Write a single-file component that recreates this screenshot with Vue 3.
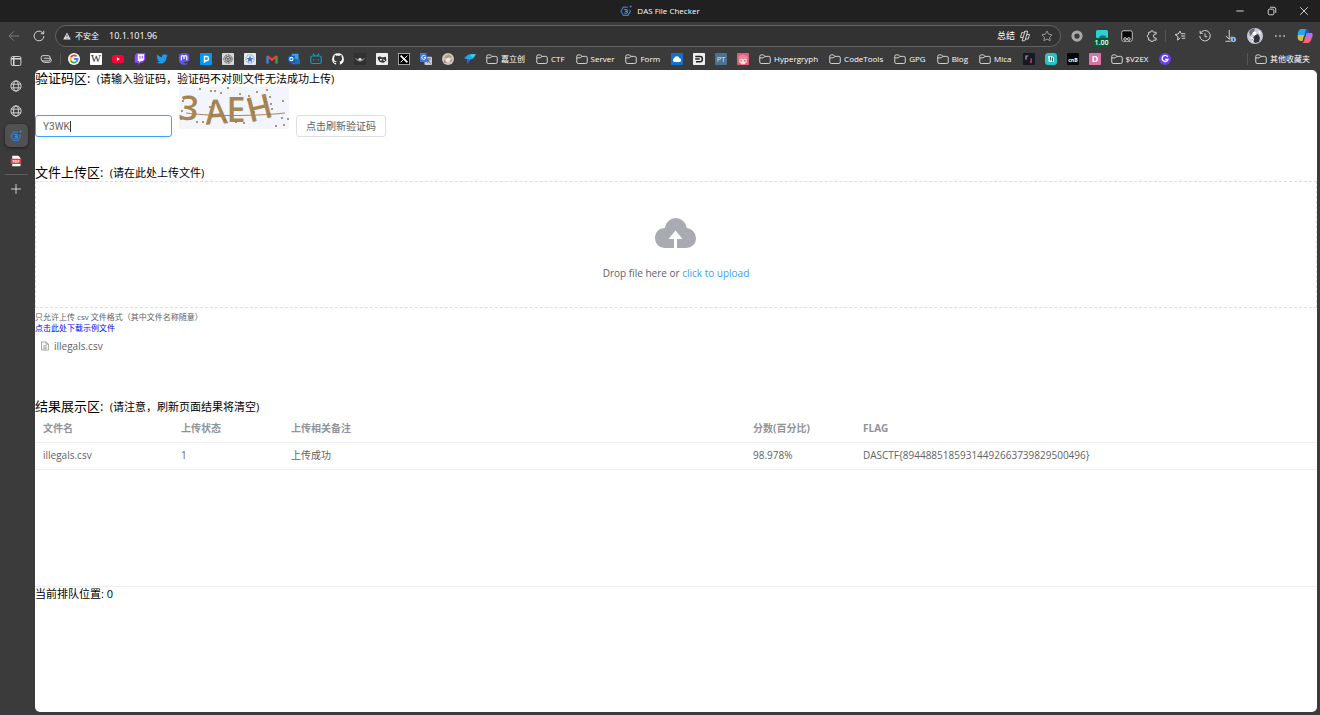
<template>
  <div class="window">
    <header class="title-bar">
      <div class="title">
        <svg class="title-icon" viewBox="0 0 16 16" v-html="icons.das"></svg>
        <span>DAS File Checker</span>
      </div>
      <div class="window-buttons">
        <button v-for="b in windowButtons" :key="b.label" :aria-label="b.label">
          <svg class="icon" viewBox="0 0 16 16" v-html="b.icon"></svg>
        </button>
      </div>
    </header>

    <div class="toolbar">
      <button class="nav-button dim" aria-label="Back">
        <svg class="icon" viewBox="0 0 16 16"><path d="M15 8H1.5M7.5 2 1.5 8l6 6" /></svg>
      </button>
      <button class="nav-button" aria-label="Reload">
        <svg class="icon" viewBox="0 0 16 16"><path d="M14.5 8A6.5 6.5 0 1 1 12.4 3.2L14 4.8M14.3 1v4h-4" /></svg>
      </button>
      <div class="address-bar">
        <svg class="warn-icon" viewBox="0 0 16 16">
          <path d="M8 1 15.5 15H.5Z" fill="#e0e0e0" />
          <path d="M8 5.5v5M8 12v1.6" stroke="#333" stroke-width="1.6" />
        </svg>
        <span class="insecure">不安全</span>
        <input class="url" v-model="url" aria-label="Address" />
        <button class="summary">总结</button>
        <svg class="icon" viewBox="0 0 16 16">
          <path d="M6 3.5 8 1.6h3.500L10.300 6H14l-1.700 6H9L7.500 14.400H4.200L5.500 10H2L3.700 3.500ZM8 1.600 5.500 10M10.300 6 8.500 12.500" />
        </svg>
        <svg class="icon star" viewBox="0 0 16 16">
          <path d="m8 1.3 2.1 4.3 4.7.7-3.4 3.3.8 4.7L8 12.1l-4.2 2.2.8-4.7L1.2 6.3l4.7-.7Z" />
        </svg>
      </div>
      <div class="extensions">
        <button v-for="e in extensions" :key="e.label" :aria-label="e.label" :class="{ divided: e.divided }">
          <svg class="icon" :class="{ large: e.large }" viewBox="0 0 16 16" v-html="e.icon"></svg>
          <span v-if="e.badge" class="badge">{{ e.badge }}</span>
        </button>
      </div>
    </div>

    <div class="body">
      <aside class="sidebar">
        <button v-for="(t, i) in tabs" :key="i" class="tab" :class="{ active: t.active }" :aria-label="t.label">
          <svg class="icon" viewBox="0 0 16 16" v-html="t.icon"></svg>
        </button>
        <hr />
        <button class="tab" aria-label="New tab">
          <svg class="icon" viewBox="0 0 16 16"><path d="M8 1.5v13M1.5 8h13" /></svg>
        </button>
      </aside>

      <div class="content">
        <nav class="bookmarks">
          <svg class="icon" viewBox="0 0 16 16">
            <rect x="1.5" y="3.5" width="12" height="7" rx="2.5" />
            <path d="M5 7h8a2.500 2.500 0 0 1 2 2.500 3 3 0 0 1-3 3H6a3 3 0 0 1-3-2" />
          </svg>
          <span class="divider"></span>
          <a v-for="(b, i) in bookmarks" :key="i" href="#" class="bookmark" :aria-label="b.name">
            <svg class="icon" viewBox="0 0 16 16" v-html="b.icon || icons.folder"></svg>
            <span v-if="!b.icon">{{ b.name }}</span>
          </a>
          <span class="divider last"></span>
          <a href="#" class="bookmark">
            <svg class="icon" viewBox="0 0 16 16" v-html="icons.folder"></svg>
            <span>其他收藏夹</span>
          </a>
        </nav>

        <main class="page">
          <section class="captcha-section">
            <h2>验证码区: <small>(请输入验证码，验证码不对则文件无法成功上传)</small></h2>
            <div class="captcha-row">
              <div class="captcha-input">
                <input v-model="captcha" aria-label="验证码" />
                <span class="caret"></span>
              </div>
              <svg class="captcha-image" viewBox="0 0 110 42">
                <rect width="110" height="42" fill="#f3f5fe" />
                <g class="captcha-letters">
                  <text x="10" y="33" transform="rotate(6 10 20)">3</text>
                  <text x="37" y="37" transform="rotate(-4 37 22)">A</text>
                  <text x="57" y="35">E</text>
                  <text x="80" y="33" transform="rotate(-14 80 20)">H</text>
                </g>
                <path d="M7 26Q30 29 60 28.500T106 26" fill="none" stroke="#a68554" />
                <circle v-for="(d, i) in dots" :key="i" :cx="d[0]" :cy="d[1]" r="1" fill="#9b7437" />
              </svg>
              <button class="refresh" @click="captcha = ''">点击刷新验证码</button>
            </div>
          </section>

          <section class="upload-section">
            <h2>文件上传区: <small>(请在此处上传文件)</small></h2>
            <button class="dragger">
              <svg class="cloud" viewBox="0 0 42 32">
                <path d="M9.500 31A9.500 9.500 0 0 1 0 21.500 9.500 9.500 0 0 1 9.800 11 11 11 0 0 1 31.700 11 10 10 0 0 1 41 21 9.500 9.500 0 0 1 31.500 31H22V22h5.500l-7-8.500-7 8.500H19v9Z" fill="#a8abb2" />
              </svg>
              <span>Drop file here or <em>click to upload</em></span>
            </button>
            <div class="tip">
              <div>只允许上传 csv 文件格式（其中文件名称随意）</div>
              <a href="#">点击此处下载示例文件</a>
            </div>
            <div class="file">
              <svg viewBox="0 0 16 16"><path d="M2.500 1.500h7L13.500 5v9.500h-11ZM9.500 1.500V5h4M5 7.500h6M5 10h6M5 12.300h6" /></svg>
              <span>illegals.csv</span>
            </div>
          </section>

          <section class="result-section">
            <h2>结果展示区: <small>(请注意，刷新页面结果将清空)</small></h2>
            <div class="table-box">
              <table>
                <colgroup>
                  <col class="col-name" />
                  <col class="col-short" />
                  <col />
                  <col class="col-short" />
                  <col />
                </colgroup>
                <thead>
                  <tr>
                    <th v-for="c in columns" :key="c">{{ c }}</th>
                  </tr>
                </thead>
                <tbody>
                  <tr v-for="r in results" :key="r.name">
                    <td>{{ r.name }}</td>
                    <td>{{ r.status }}</td>
                    <td>{{ r.remark }}</td>
                    <td>{{ r.score }}</td>
                    <td>{{ r.flag }}</td>
                  </tr>
                </tbody>
              </table>
            </div>
            <p class="queue">当前排队位置: {{ queue }}</p>
          </section>
        </main>
      </div>
    </div>
  </div>
</template>

<script setup>
import { ref } from 'vue';

const url = ref('10.1.101.96');
const captcha = ref('Y3WK');
const queue = ref(0);

const columns = ['文件名', '上传状态', '上传相关备注', '分数(百分比)', 'FLAG'];
const results = ref([
  {
    name: 'illegals.csv',
    status: 1,
    remark: '上传成功',
    score: '98.978%',
    flag: 'DASCTF{89448851859314492663739829500496}'
  }
]);

// Noise dots of the captcha
const dots = [
  [21, 2], [32, 4], [36, 4], [49, 1], [42, 6], [4, 14], [9, 10], [3, 24], [2, 32],
  [18, 35], [24, 35], [31, 20], [34, 16], [33, 28], [46, 33], [61, 7], [70, 9],
  [69, 13], [78, 5], [88, 3], [91, 10], [86, 15], [92, 17], [93, 22], [90, 27],
  [104, 14], [103, 31], [109, 32], [97, 39], [105, 38], [57, 35], [65, 36], [75, 25]
];

const globe = '<circle cx="8" cy="8" r="6.800"/><ellipse cx="8" cy="8" rx="3.200" ry="6.800"/><path d="M1.500 5.500h13M1.500 10.500h13"/>';
const tile = (bg, inner) => `<rect width="16" height="16" rx="1" fill="${bg}" stroke="none"/>${inner}`;
const letter = (ch, color, size = 13, weight = 700) =>
  `<text x="8" y="12" text-anchor="middle" font-size="${size}" font-weight="${weight}" fill="${color}" stroke="none">${ch}</text>`;

const icons = {
  das: '<path d="M10.500 2.800H4.500L1.300 8.300l3.200 5.500h6.300l3-5.500-1-2" fill="none" stroke="#2f7fd6" stroke-width="1.500"/><path d="M5.500 6h3.300a1.300 1.300 0 0 1 0 2.500H6.500M8.800 8.500a1.300 1.300 0 0 1 0 2.600H5.500" fill="none" stroke="#3b8ee5" stroke-width="1.400"/><circle cx="14.200" cy="2" r="1.300" fill="#3b8ee5" stroke="none"/>',
  folder: '<path d="M1 4.500a2 2 0 0 1 2-2h3L8 4.500h5a2 2 0 0 1 2 2V12a2 2 0 0 1-2 2H3a2 2 0 0 1-2-2ZM1 6.500h4.500l2.500-2"/>'
};

const windowButtons = [
  { label: 'Minimize', icon: '<path d="M3 8h10"/>' },
  { label: 'Restore', icon: '<rect x="3" y="5.500" width="7.500" height="7.500" rx="1.500"/><path d="M5.500 3h5A2.500 2.500 0 0 1 13 5.500v5"/>' },
  { label: 'Close', icon: '<path d="m3 3 10 10M13 3 3 13"/>' }
];

const extensions = [
  { label: 'Record', icon: '<circle cx="8" cy="8" r="5.500" stroke="#a8a8a8" stroke-width="4"/>' },
  {
    label: 'Speed',
    badge: '1.00',
    icon: '<rect y="0" width="16" height="11" rx="2" fill="#2fd0d0" stroke="none"/><path d="M4 11a5 4 0 0 1 10 0Z" fill="#176a9c" stroke="none"/>'
  },
  {
    label: 'Scripts',
    icon: '<rect x="1" y="1" width="14" height="14" rx="2.500" fill="#080808" stroke="#c8c8c8"/><circle cx="5.500" cy="12" r="1.800" fill="#222"/><circle cx="10.500" cy="12" r="1.800" fill="#222"/>'
  },
  {
    label: 'Extensions',
    icon: '<path d="M13.500 5.500V3H10a2 2 0 0 0-4 0H3.500v3a2.200 2.200 0 0 0 0 4.300v3.200H6a2 2 0 0 0 4 0h3.500v-2.800h-1a2.200 2.200 0 0 1 0-5.200Z"/>'
  },
  {
    label: 'Favorites',
    divided: true,
    icon: '<path d="m8.500 10.500-3.800 3 .7-4.500-4-3L5.700 5.300 8 1.500l1.700 3.500H15M9.500 8H15M10.500 11H15"/>'
  },
  { label: 'History', icon: '<path d="M2 4a7 7 0 1 1-1 4M1.500 1v3.500H5M8 4.500V9h3"/>' },
  {
    label: 'Downloads',
    icon: '<path d="M7 0v12M2.500 8 7 12.300 11 8.500M2 15h7"/><circle cx="12.500" cy="12.500" r="3.500" fill="#91bdf7" stroke="none"/><path d="M12.500 11v3.500" stroke="#234"/>'
  },
  {
    label: 'Profile',
    large: true,
    icon: '<circle cx="8" cy="8" r="8" fill="#c9cbd4" stroke="none"/><path d="M2 4Q4 0 8 .500L7 4 3 8Z" fill="#6c6b78" stroke="none"/><path d="m8 7 3-1 2 4-1 4-4 1-3-3Z" fill="#30303c" stroke="none"/><circle cx="7.500" cy="5.500" r="2" fill="#fff" stroke="none"/><path d="m3.500 9.500 3 1.500-1 3M12 3l1 3" stroke="#fff" stroke-width="1.200"/>'
  },
  { label: 'More', icon: '<path d="M1.500 8h2M7 8h2M12.500 8h2" stroke-width="2"/>' },
  {
    label: 'Copilot',
    large: true,
    icon: '<g stroke="none"><path d="M4 1h5.500L7 9H1C0 5 2 1 4 1Z" fill="#25a9ed"/><path d="M1 7h6l-1.500 6H4C1 13 0 10 1 7Z" fill="#d2bd3f"/><path d="M9 1c3 0 2.500 3 4 4H8Z" fill="#244fc3"/><path d="M9.500 5H14c2 0 2 2 1 5h-7Z" fill="#b96cf1"/><path d="M8 9h7c-1 4-2 6-5 6H5c2 0 2.500-4 3-6Z" fill="#f3667c"/></g>'
  }
];

const tabs = [
  { label: 'Tab actions', icon: '<rect x="1.500" y="2" width="13" height="12" rx="2"/><path d="M1.500 5h13M5 2v12" stroke-width="2"/>' },
  { label: 'Web page', icon: globe },
  { label: 'Web page', icon: globe },
  { label: 'DAS File Checker', icon: icons.das, active: true },
  {
    label: 'PDF',
    icon: '<g stroke="none"><path d="M3 1h8l3 3v11H3Z" fill="#fff"/><rect x="1" y="5" width="14" height="7" fill="#e5373c"/><text x="8" y="10.500" text-anchor="middle" font-size="5" font-weight="700" fill="#fff">PDF</text></g>'
  }
];

const bookmarks = [
  {
    name: 'Google',
    icon: '<circle cx="8" cy="8" r="8" fill="#fff" stroke="none"/><g stroke-width="2.400"><path d="M11.500 4.600A4.800 4.800 0 0 0 3.800 5.700" stroke="#ea4335"/><path d="M3.800 5.700a4.800 4.800 0 0 0 0 4.600" stroke="#fbbc05"/><path d="M3.800 10.300a4.800 4.800 0 0 0 7.400 1.300" stroke="#34a853"/><path d="M11.200 11.600A4.800 4.800 0 0 0 12.800 8H8" stroke="#4285f4"/></g>'
  },
  { name: 'Wikipedia', icon: tile('#fff', '<text x="8" y="12.500" text-anchor="middle" font-family="Liberation Serif, serif" font-size="14" fill="#222" stroke="none">W</text>') },
  { name: 'YouTube', icon: '<rect y="2.500" width="16" height="11" rx="3" fill="#f03" stroke="none"/><path d="m6.500 5.500 4 2.500-4 2.500Z" fill="#fff" stroke="none"/>' },
  { name: 'Twitch', icon: '<path d="M3.500 0H15v9l-4 4H8.500l-3 3v-3H1V3Z" fill="#9146ff" stroke="none"/><path d="M5 1.500h8.500v7l-2 2H9l-2 2v-2H5Z" fill="#fff" stroke="none"/><path d="M8 4v3.500M11 4v3.500" stroke="#9146ff"/>' },
  { name: 'Twitter', icon: '<path d="M15.500 3.500 14 5.500C14 11 10 14 5.500 14 3.500 14 2 13.500.5 12.500c2 0 3.300-.5 4.500-1.300-1.500 0-2.500-1-3-2.200h1.300C1.500 8.500 1 7.200 1 5.800l1.300.4C1 5 .8 3.300 1.500 2c2 2.200 4 3.300 6.500 3.500C7.600 3 9.300 1.500 11.200 1.500c1 0 1.700.4 2.300 1L15.500 2l-1 1.600Z" fill="#1d9bf0" stroke="none"/>' },
  { name: 'Mastodon', icon: '<path d="M4 .8C7 0 10 0 12.500.8 15.500 2 15 6 15 8c0 3-2 4-7.500 4 0 1.500 2 2 4.500 1.500v1.700C7 16.500 3 15.500 2 12 1 9 1 6 1 4.500 1 2.300 2.500 1.200 4 .8Z" fill="#6059df" stroke="none"/><path d="M4.500 9.500V5.300C4.500 3 8 3 8 5.500V8M8 5.500C8 3 11.700 3 11.700 5.300v4.200" stroke="#fff" stroke-width="1.600"/>' },
  { name: 'Pixiv', icon: tile('#0096fa', '<path d="M6 13V4.500h2.500a2.800 2.800 0 0 1 0 5.800H6" stroke="#fff" stroke-width="2"/>') },
  { name: 'OpenAI', icon: tile('#d7d7d7', '<circle cx="8" cy="8" r="5.500" stroke="#555" stroke-dasharray="4 1"/><path d="M8 4.500 11 6v4l-3 1.500L5 10V6ZM5 6l3 2 3-2M8 8v3.500" stroke="#555"/>') },
  { name: 'Badge', icon: tile('#e3e9f2', '<circle cx="8" cy="8" r="5.500" stroke="#7796c5" stroke-dasharray="2 1"/><path d="m8 3.500 1.300 3 3.200.3-2.400 2.100.7 3.200L8 10.500l-2.800 1.600.7-3.200-2.400-2.100 3.200-.3Z" fill="#4872b3" stroke="none"/>') },
  { name: 'Gmail', icon: '<g stroke-width="3"><path d="M2 14V4" stroke="#4285f4"/><path d="M14 14V4" stroke="#34a853"/><path d="m2 4 6 5 6-5" stroke="#ea4335"/></g>' },
  { name: 'Outlook', icon: '<path d="M5 1h9v9H5Z" fill="#35a7e8" stroke="none"/><path d="M4 8h12v7H4Z" fill="#1b6fc0" stroke="none"/><rect y="3.500" width="9" height="9" rx="1" fill="#0f5ca8" stroke="none"/><circle cx="4.500" cy="8" r="2.200" stroke="#fff" stroke-width="1.400"/>' },
  { name: 'Bilibili', icon: '<g stroke="#0e9bc5" stroke-width="1.600"><rect x="1" y="4" width="14" height="10" rx="2.500"/><path d="m4 1 2.500 3M12 1 9.500 4M5 8v2M11 8v2"/></g>' },
  { name: 'GitHub', icon: '<path d="M8 .5a7.700 7.700 0 0 0-2.500 15v-2.200C3 13.800 2.500 12 2 11.500c1.500-.3 1.500 1.500 3.600.8l.6-1.100C3.500 10.800 2.700 9.500 2.700 7.500c0-1 .3-1.800.8-2.400-.2-.8-.1-1.600.2-2.300 1 0 1.700.5 2.500 1a8 8 0 0 1 3.800 0c.8-.5 1.500-1 2.500-1 .3.700.4 1.500.2 2.300.5.600.8 1.400.8 2.400 0 2-1 3.300-3.500 3.700.4.400.5 1 .5 1.800v2.500A7.700 7.700 0 0 0 8 .5Z" fill="#fff" stroke="none"/>' },
  { name: 'Wings', icon: tile('#303030', '<path d="M1 6.500 5 8l3-2 3 2 4-1.500-3 3.500-4 1.500L4 10Z" fill="#888" stroke="none"/><circle cx="8" cy="8.500" r="1.500" fill="#eee" stroke="none"/>') },
  { name: 'Mascot', icon: tile('#eee', '<path d="M2 6q3-3 6 0l5-1 1 5-4 3-5-1-2-3Z" fill="#333" stroke="none"/><circle cx="6.500" cy="9" r="1.300" fill="#fff" stroke="none"/><path d="m9 9 3 1M3 12l3 2" stroke="#fff"/>') },
  { name: 'X', icon: tile('#000', '<rect x=".500" y=".500" width="15" height="15" stroke="#bbb"/><path d="m3.500 3.500 9 9" stroke="#fff" stroke-width="2.400"/><path d="m12.500 3.500-9 9" stroke="#fff"/>') },
  { name: 'Translate', icon: '<g stroke="none"><rect x="6" y="5" width="10" height="11" rx="1" fill="#c6cad4"/><path d="M0 1a1 1 0 0 1 1-1h7l4 12H1a1 1 0 0 1-1-1Z" fill="#3f76df"/></g><path d="M7 4.200A2.600 2.600 0 1 0 7.600 6H5.200" stroke="#fff"/><path d="M9.500 8h5M12 7v1c0 2-1 4-2 5M11 10l3 4" stroke="#65779a"/>' },
  { name: 'Avatar', icon: '<g stroke="none"><circle cx="8" cy="8" r="8" fill="#d0c4bd"/><path d="M4 4l5-2 4 3-3 2-5 1Z" fill="#9ba86d"/><path d="m6 7 4-1 1 4-3 2-3-2Z" fill="#f6eae6"/><path d="M3 9l3 4H3ZM11 10l3-2-2 4Z" fill="#aa6b67"/></g>' },
  { name: 'Bird', icon: '<path d="M0 7 6 2l10-.5L13 7 8 9l-3 5-1-6Z" fill="#20a7e8" stroke="none"/><path d="M8 2l8-.5L11 6Z" fill="#39dbe4" stroke="none"/><path d="m8 9-3 5-1-6Z" fill="#3158db" stroke="none"/>' },
  { name: '嘉立创' },
  { name: 'CTF' },
  { name: 'Server' },
  { name: 'Form' },
  { name: 'Cloud', icon: tile('#1472cc', '<path d="M4 12a3 3 0 0 1 0-5 4 4 0 0 1 7.500 0A2.700 2.700 0 0 1 12 12Z" fill="#fff" stroke="none"/>') },
  { name: 'D mark', icon: tile('#eee', '<path d="M3 4.500h6.500a3 3.500 0 0 1 0 7H4M3 8h6" stroke="#222" stroke-width="2"/>') },
  { name: 'PT', icon: tile('#4c7193', letter('PT', '#dce5ec', 10, 400)) },
  { name: 'Anime', icon: tile('#dc5f79', '<path d="M3 7h10v5l-3 3H6l-3-3Z" fill="#ffe1d5" stroke="none"/><path d="M2 9V4l6-2 6 2v5l-3-2-2 2-2-2-3 2Z" fill="#ef8298" stroke="none"/><path d="M5.500 9.500v2M10.500 9.500v2" stroke="#913047"/>') },
  { name: 'Hypergryph' },
  { name: 'CodeTools' },
  { name: 'GPG' },
  { name: 'Blog' },
  { name: 'Mica' },
  { name: 'Quote', icon: tile('#181824', '<path d="M4 9V4h3" stroke="#aaa" stroke-width="1.500"/><path d="M11 7v5H9" stroke="#e5224f" stroke-width="2"/>') },
  { name: 'Teal', icon: '<rect width="16" height="16" rx="4" fill="#20c6c6" stroke="none"/><path d="M4 4h5l3 2v6H5Z" fill="#e8ffff" stroke="none"/><path d="M7.500 5v5M10 6v5" stroke="#24545b"/>' },
  { name: 'CnB', icon: tile('#080808', letter('cnB', '#fff', 7)) },
  { name: 'D', icon: tile('#dd72a5', letter('D', '#fff', 12)) },
  { name: '$V2EX' },
  { name: 'G', icon: '<circle cx="8" cy="8" r="8" fill="#6741e5" stroke="none"/><path d="M11.500 5A4 4 0 1 0 12 8.500H8" stroke="#fff" stroke-width="1.800"/>' }
];
</script>

<style>
body {
  margin: 0;
  background: #3b3b3b;
}
</style>

<style scoped>
.window {
  display: flex;
  flex-direction: column;
  min-height: 100vh;
  background: #3b3b3b;
  color: #fff;
  font-family: "Open Sans", "Noto Sans CJK SC", sans-serif;
  font-size: 8px;
  line-height: 12px;
}

* {
  box-sizing: border-box;
}

button {
  position: relative;
  display: flex;
  align-items: center;
  justify-content: center;
  padding: 0;
  border: none;
  background: none;
  color: inherit;
  font: inherit;
  cursor: pointer;
}

input {
  font: inherit;
  outline: none;
}

.icon {
  flex: none;
  width: 12px;
  height: 12px;
  fill: none;
  stroke: #d6d6d6;
  stroke-width: 1.3;
}

.icon.large {
  width: 16px;
  height: 16px;
}

.title-bar {
  display: grid;
  grid-template-columns: 1fr auto 1fr;
  align-items: center;
  height: 22px;
  background: #202020;
}

.title {
  grid-column: 2;
  display: flex;
  align-items: center;
  gap: 5px;
}

.title-icon {
  width: 12px;
  height: 12px;
}

.window-buttons {
  display: flex;
  justify-content: flex-end;
}

.window-buttons button {
  width: 32px;
  height: 22px;
}

.toolbar {
  display: flex;
  align-items: center;
  height: 27px;
  padding: 0 3px 0 1px;
}

.nav-button {
  width: 25px;
  height: 22px;
}

.nav-button.dim {
  opacity: 0.45;
}

.address-bar {
  display: flex;
  flex: 1;
  align-items: center;
  height: 22px;
  margin-left: 4px;
  padding: 0 7px;
  border: 1px solid #626262;
  border-radius: 11px;
  background: #323232;
}

.warn-icon {
  width: 8px;
  height: 8px;
}

.insecure {
  margin-left: 4px;
}

.url {
  flex: 1;
  margin-left: 10px;
  padding: 0;
  border: none;
  background: none;
  color: #fff;
  font-size: 9px;
}

.summary {
  margin-right: 4px;
  font-size: 9px;
}

.icon.star {
  margin-left: 10px;
  stroke: #999;
}

.extensions {
  display: flex;
  padding-left: 3px;
}

.extensions button {
  width: 25px;
  height: 22px;
}

.extensions .divided {
  margin-left: 3px;
}

.divided::before {
  position: absolute;
  top: 5px;
  left: -2px;
  width: 1px;
  height: 12px;
  background: #565656;
  content: "";
}

.badge {
  position: absolute;
  right: 4px;
  bottom: 0;
  left: 4px;
  border-radius: 2px;
  background: #0b5a2c;
  font-size: 7px;
  font-weight: 600;
  line-height: 9px;
}

.body {
  display: flex;
  flex: 1;
}

.sidebar {
  display: flex;
  flex-direction: column;
  align-items: center;
  flex: none;
  width: 35px;
  padding-right: 3px;
}

.tab {
  width: 23px;
  height: 23px;
  margin-bottom: 2px;
}

.tab.active {
  border-radius: 5px;
  background: #515151;
  box-shadow: 0 1px 3px #1c1c1c;
}

.sidebar hr {
  width: 23px;
  margin: 0 0 2px;
  border: none;
  border-top: 1px solid #5c5c5c;
}

.content {
  display: flex;
  flex: 1;
  flex-direction: column;
  min-width: 0;
  padding: 0 3px 3px 0;
}

.bookmarks {
  display: flex;
  align-items: center;
  gap: 10px;
  height: 21px;
  padding: 0 6px 2px 5px;
  white-space: nowrap;
}

.bookmark {
  display: flex;
  align-items: center;
  gap: 3px;
  color: #fff;
  text-decoration: none;
}

.bookmark span {
  padding-right: 1px;
}

.divider {
  width: 1px;
  height: 12px;
  margin: 0 -3px 0 -2px;
  background: #565656;
}

.divider.last {
  margin-left: auto;
}

.page {
  flex: 1;
  border-radius: 5px;
  background: #fff;
  color: #000;
  overflow: hidden;
}

h2 {
  margin: 0;
  font-size: 13px;
  font-weight: 400;
  line-height: 17px;
}

h2 small {
  margin-left: 3px;
  font-size: 11px;
}

.captcha-row {
  display: flex;
  align-items: flex-end;
  gap: 7px;
  height: 50px;
}

.captcha-input {
  position: relative;
  width: 137px;
}

.captcha-input input {
  display: block;
  width: 100%;
  height: 22px;
  padding: 0 7px;
  border: 1px solid #409eff;
  border-radius: 3px;
  color: #606266;
  font-family: Roboto, "Liberation Sans", sans-serif;
  font-size: 10px;
}

.caret {
  position: absolute;
  top: 6px;
  left: 35px;
  width: 1px;
  height: 11px;
  background: #333;
}

.captcha-image {
  width: 110px;
  height: 42px;
  margin-bottom: 8px;
}

.captcha-letters {
  fill: #a68554;
  font-size: 34px;
  font-weight: 600;
  text-anchor: middle;
}

.refresh {
  height: 22px;
  padding: 0 9px;
  border: 1px solid #dcdfe6;
  border-radius: 3px;
  color: #606266;
  font-size: 10px;
}

.upload-section {
  margin-top: 27px;
}

.dragger {
  flex-direction: column;
  gap: 17px;
  width: 100%;
  height: 127px;
  padding-top: 8px;
  border: 1px dashed #dcdfe6;
  color: #606266;
  font-size: 10px;
  line-height: 14px;
}

.cloud {
  width: 42px;
  height: 32px;
}

.dragger em {
  color: #409eff;
  font-style: normal;
}

.tip {
  margin-top: 3px;
  color: #606266;
  line-height: 11px;
}

.tip a {
  display: block;
  color: #00f;
  text-decoration: none;
}

.file {
  display: flex;
  align-items: center;
  gap: 4px;
  height: 17px;
  margin-top: 4px;
  padding-left: 5px;
  color: #606266;
  font-size: 10px;
}

.file svg {
  width: 10px;
  height: 10px;
  fill: none;
  stroke: #909399;
  stroke-width: 1.3;
}

.result-section {
  margin-top: 44px;
}

.table-box {
  height: 172px;
  border-bottom: 1px solid #ebeef5;
}

table {
  width: 100%;
  border-collapse: collapse;
  table-layout: fixed;
  color: #606266;
  font-size: 10px;
  line-height: 15px;
}

.col-name {
  width: 138px;
}

.col-short {
  width: 110px;
}

th,
td {
  height: 27px;
  padding: 0 8px;
  border-bottom: 1px solid #ebeef5;
  text-align: left;
}

th {
  color: #909399;
  font-weight: 700;
}

.queue {
  margin: 0;
  font-size: 11px;
  line-height: 14px;
}
</style>
